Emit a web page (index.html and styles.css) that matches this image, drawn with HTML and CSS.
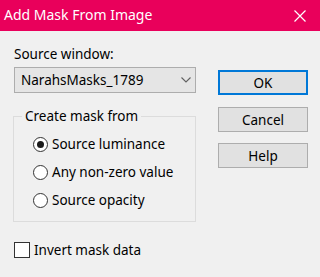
FILE: index.html
```html
<!DOCTYPE html>
<html lang="en">

<head>
    <meta charset="UTF-8">
    <title>Add Mask From Image</title>
    <link rel="stylesheet" href="styles.css">
</head>

<body>
    <div class="dialog">
        <!-- Title bar -->
        <div class="titlebar">
            <span class="title">Add Mask From Image</span>
            <svg class="close" width="12" height="12" viewBox="0 0 12 12">
                <path d="M0.5 0.5 L11.5 11.5 M11.5 0.5 L0.5 11.5" stroke="#fff" stroke-width="1.2" fill="none"/>
            </svg>
        </div>

        <div class="content">
            <div class="left">
                <div class="label">Source window:</div>
                <div class="combo">
                    <span>NarahsMasks_1789</span>
                    <svg width="10" height="6" viewBox="0 0 10 6">
                        <path d="M0.5 0.5 L5 5 L9.5 0.5" stroke="#606060" stroke-width="1.1" fill="none"/>
                    </svg>
                </div>

                <fieldset class="group">
                    <legend>Create mask from</legend>
                    <div class="radio-row">
                        <span class="radio checked"></span>
                        <span>Source luminance</span>
                    </div>
                    <div class="radio-row">
                        <span class="radio"></span>
                        <span>Any non-zero value</span>
                    </div>
                    <div class="radio-row">
                        <span class="radio"></span>
                        <span>Source opacity</span>
                    </div>
                </fieldset>

                <div class="check-row">
                    <span class="checkbox"></span>
                    <span>Invert mask data</span>
                </div>
            </div>

            <!-- Buttons -->
            <div class="buttons">
                <div class="btn default">OK</div>
                <div class="btn">Cancel</div>
                <div class="btn">Help</div>
            </div>
        </div>
    </div>
</body>

</html>
```

FILE: styles.css
```css
/* General Styles */
body {
    margin: 0;
    padding: 0;
    font-family: "Noto Sans", "Open Sans", sans-serif;
    font-size: 13.5px;
    color: #000;
    background-color: #f0f0f0;
}

.dialog {
    width: 320px;
    height: 277px;
    background-color: #f0f0f0;
    overflow: hidden;
}

/* Title bar */
.titlebar {
    height: 31px;
    background-color: #e9005b;
    display: flex;
    align-items: center;
    justify-content: space-between;
    padding: 0 14px 0 4px;
    box-sizing: border-box;
}

.title {
    color: #fff;
    font-size: 14px;
    line-height: 18px;
    margin-top: -1px;
}

.close {
    display: block;
}

/* Content */
.content {
    display: flex;
}

.left {
    width: 183px;
    padding-left: 13px;
}

.label {
    line-height: 18px;
    margin-top: 14px;
    padding-left: 1px;
}

.combo {
    margin-top: 4px;
    margin-left: 1px;
    height: 26px;
    box-sizing: border-box;
    border: 1px solid #adadad;
    background-color: #e5e5e5;
    display: flex;
    align-items: center;
    justify-content: space-between;
    padding: 0 4px 0 6px;
}

/* Group box */
.group {
    margin: 14px 0 0 0;
    padding: 5px 0 7px 0;
    border: 1px solid #dcdcdc;
    min-width: 0;
}

.group legend {
    margin-left: 8px;
    padding: 0 3px;
    line-height: 18px;
}

.radio-row {
    display: flex;
    align-items: center;
    height: 28px;
    padding-left: 19px;
}

.radio {
    width: 15px;
    height: 15px;
    box-sizing: border-box;
    border: 1px solid #333;
    border-radius: 50%;
    background-color: #fff;
    margin-right: 4px;
    display: flex;
    align-items: center;
    justify-content: center;
}

.radio.checked::before {
    content: "";
    width: 7px;
    height: 7px;
    border-radius: 50%;
    background-color: #1a1a1a;
}

/* Checkbox */
.check-row {
    display: flex;
    align-items: center;
    margin-top: 19px;
    padding-left: 1px;
}

.checkbox {
    width: 16px;
    height: 16px;
    box-sizing: border-box;
    border: 1px solid #333;
    background-color: #fff;
    margin-right: 4px;
}

/* Buttons */
.buttons {
    display: flex;
    flex-direction: column;
    gap: 11px;
    margin-left: 22px;
    margin-top: 39px;
}

.btn {
    width: 90px;
    height: 25px;
    box-sizing: border-box;
    border: 1px solid #adadad;
    background-color: #e1e1e1;
    display: flex;
    align-items: center;
    justify-content: center;
}

.btn.default {
    border: 2px solid #0078d7;
    margin-bottom: 1px;
}
```
